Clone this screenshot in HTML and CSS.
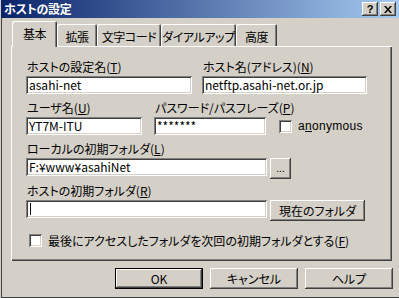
FILE: index.html
```html
<!DOCTYPE html>
<html lang="ja">
<head>
<meta charset="utf-8">
<title>ホストの設定</title>
<link rel="stylesheet" href="styles.css">
</head>
<body>
<div class="win">
  <div class="titlebar">
    <span class="title">ホストの設定</span>
    <div class="caps">
      <span class="cap q">?</span>
      <span class="cap x"><svg width="8" height="7" viewBox="0 0 8 7"><path d="M0 0h2l2 2.5L6 0h2L5 3.5 8 7H6L4 4.5 2 7H0l3-3.5z" fill="#000"/></svg></span>
    </div>
  </div>
  <div class="frame">
    <div class="tabs">
      <div class="tab sel w1">基本</div>
      <div class="tab w2">拡張</div>
      <div class="tab w3">文字コード</div>
      <div class="tab w4">ダイアルアップ</div>
      <div class="tab w5">高度</div>
    </div>
    <div class="panel">
      <div class="row r1">
        <div class="group g166">
          <span class="lbl">ホストの設定名(<u>T</u>)</span>
          <div class="input">asahi-net</div>
        </div>
        <div class="group g165">
          <span class="lbl">ホスト名(アドレス)(<u>N</u>)</span>
          <div class="input">netftp.asahi-net.or.jp</div>
        </div>
      </div>
      <div class="row r2">
        <div class="group g116">
          <span class="lbl">ユーザ名(<u>U</u>)</span>
          <div class="input">YT7M-ITU</div>
        </div>
        <div class="group g112">
          <span class="lbl">パスワード/パスフレーズ(<u>P</u>)</span>
          <div class="input pw">*******</div>
        </div>
        <label class="chk anon"><span class="box"></span><span class="chktext">a<u>n</u>onymous</span></label>
      </div>
      <div class="row r3">
        <div class="group">
          <span class="lbl">ローカルの初期フォルダ(<u>L</u>)</span>
          <div class="ctl">
            <div class="input wide">F:¥www¥asahiNet</div>
            <div class="btn dots">...</div>
          </div>
        </div>
      </div>
      <div class="row r4">
        <div class="group">
          <span class="lbl">ホストの初期フォルダ(<u>R</u>)</span>
          <div class="ctl">
            <div class="input wide"><span class="caret"></span></div>
            <div class="btn cur">現在のフォルダ</div>
          </div>
        </div>
      </div>
      <label class="chk last"><span class="box"></span><span class="chktext">最後にアクセスしたフォルダを次回の初期フォルダとする(<u>F</u>)</span></label>
    </div>
    <div class="buttons">
      <div class="btn big def">OK</div>
      <div class="btn big">キャンセル</div>
      <div class="btn big">ヘルプ</div>
    </div>
  </div>
</div>
</body>
</html>
```
FILE: styles.css
```css
* { box-sizing: border-box; }
html, body { margin: 0; padding: 0; background: #d4d0c8; }
body {
  font-family: "Noto Sans CJK JP", "Liberation Sans", sans-serif;
  font-size: 12px;
  font-feature-settings: "palt" 1;
  color: #000;
}
u { text-decoration: underline; text-underline-offset: 1px; }

.win {
  width: 399px;
  height: 298px;
  background: #d4d0c8;
  padding-left: 1px;
  display: flex;
  flex-direction: column;
  overflow: hidden;
}

.titlebar {
  height: 18px;
  flex: none;
  background: linear-gradient(to right, #0a246a, #a6caf0);
  display: flex;
  align-items: center;
  padding: 0 3px 0 3px;
}
.title {
  flex: 1;
  color: #fff;
  font-weight: bold;
  line-height: 18px;
  letter-spacing: -0.3px;
}
.caps { display: flex; gap: 2px; }
.cap {
  width: 16px;
  height: 14px;
  background: #d4d0c8;
  box-shadow: inset -1px -1px #404040, inset 1px 1px #ffffff, inset -2px -2px #808080, inset 2px 2px #d4d0c8;
  display: flex;
  align-items: center;
  justify-content: center;
  font-family: "Liberation Sans", sans-serif;
  font-weight: bold;
  font-size: 11px;
  line-height: 1;
}
.cap svg { display: block; }

.frame {
  flex: 1;
  border-left: 1px solid #404040;
  border-bottom: 1px solid #404040;
  padding: 3px 0 0 9px;
  display: flex;
  flex-direction: column;
}

.tabs {
  display: flex;
  align-items: flex-end;
  height: 25px;
  padding-left: 1px;
}
.tab {
  height: 22px;
  box-shadow: inset 1px 1px #ffffff, inset -1px 0 #404040, inset -2px 0 #808080;
  border-top-left-radius: 2px;
  border-top-right-radius: 2px;
  display: flex;
  align-items: center;
  justify-content: center;
  padding-top: 2px;
  white-space: nowrap;
  letter-spacing: -0.4px;
}
.tab.sel {
  height: 26px;
  margin-bottom: -1px;
  position: relative;
  z-index: 1;
  background: #d4d0c8;
  padding-top: 1px;
  padding-bottom: 3px;
}
.w1 { width: 45px; }
.w2 { width: 40px; }
.w3 { width: 64px; }
.w4 { width: 75px; }
.w5 { width: 41px; }

.panel {
  width: 381px;
  height: 215px;
  flex: none;
  box-shadow: inset 1px 1px #ffffff, inset -1px -1px #404040, inset -2px -2px #808080;
  padding: 14px 0 0 15px;
  display: flex;
  flex-direction: column;
}

.row { display: flex; align-items: flex-end; }
.r2 { margin-top: 7px; }
.r3 { margin-top: 7px; }
.r4 { margin-top: 5px; }

.group { display: flex; flex-direction: column; gap: 2px; }
.g166 { width: 166px; }
.g165 { width: 165px; margin-left: 10px; }
.g116 { width: 116px; }
.g112 { width: 112px; margin-left: 12px; }

.lbl {
  line-height: 14px;
  height: 14px;
  padding-left: 1px;
  white-space: nowrap;
}

.input {
  height: 18px;
  background: #ffffff;
  box-shadow: inset 1px 1px #808080, inset -1px -1px #ffffff, inset 2px 2px #404040, inset -2px -2px #d4d0c8;
  padding: 0 3px;
  line-height: 18px;
  white-space: nowrap;
  overflow: hidden;
  display: flex;
  align-items: center;
}
.input.wide { width: 241px; }
.caret {
  width: 1px;
  height: 12px;
  background: #000;
  margin-left: 1px;
}

.ctl { display: flex; align-items: flex-start; gap: 3px; }

.btn {
  background: #d4d0c8;
  box-shadow: inset -1px -1px #404040, inset 1px 1px #ffffff, inset -2px -2px #808080, inset 2px 2px #d4d0c8;
  display: flex;
  align-items: center;
  justify-content: center;
  white-space: nowrap;
}
.dots { width: 21px; height: 21px; font-size: 10px; padding-bottom: 2px; }
.cur { width: 95px; height: 21px; }

.chk { display: flex; align-items: center; gap: 6px; white-space: nowrap; }
.box {
  width: 13px;
  height: 13px;
  background: #ffffff;
  box-shadow: inset 1px 1px #808080, inset -1px -1px #ffffff, inset 2px 2px #404040, inset -2px -2px #d4d0c8;
  flex: none;
}
.anon { margin-left: 13px; margin-bottom: 2px; }
.anon .chktext { font-family: "Liberation Sans", sans-serif; letter-spacing: 0.3px; }
.last { margin-top: 11px; margin-left: 3px; }

.buttons {
  display: flex;
  justify-content: flex-end;
  gap: 7px;
  padding-right: 6px;
  margin-top: 7px;
}
.big { width: 88px; height: 21px; }
.def {
  box-shadow: inset 0 0 0 1px #000, inset -2px -2px #404040, inset 2px 2px #ffffff, inset -3px -3px #808080;
}
```
